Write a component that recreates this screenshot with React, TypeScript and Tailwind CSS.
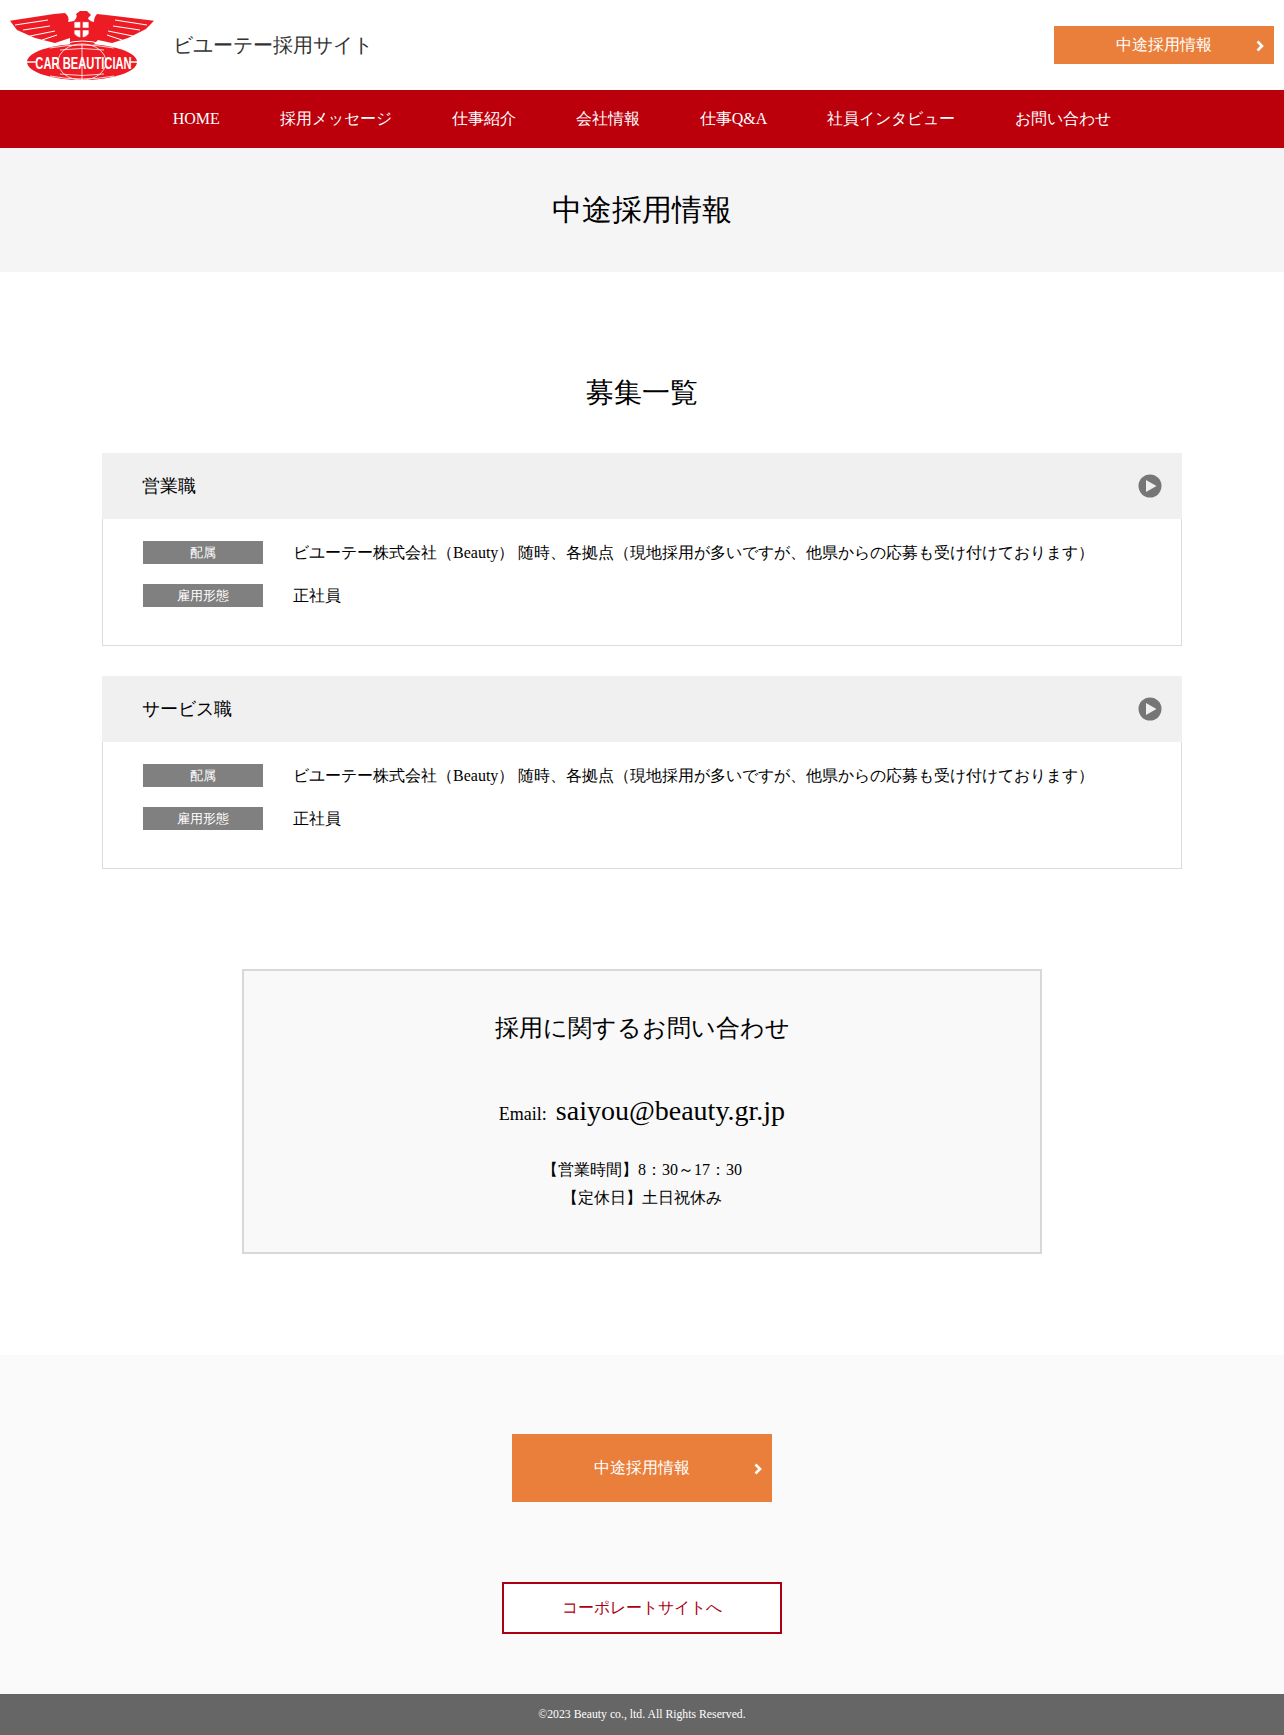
const NAV_ITEMS = ["HOME", "採用メッセージ", "仕事紹介", "会社情報", "仕事Q&A", "社員インタビュー", "お問い合わせ"];

const JOBS = ["営業職", "サービス職"];

function Logo() {
	return (
		<svg width="146" height="72" viewBox="0 0 146 72" className="shrink-0">
			{/* wings and body */}
			<path d="M0 11.7 L44 5 L55 4 Q60 8 58 13 L64 12 Q68 8 66 5 L70 2 L77 2 L81 6 L78 9 Q79 12 84 13 Q84 8 87 5 L105 7 L144 11.7 L136 20 L118 29 L102 34 L88 31 L84 35 L60 35 L60 29 L45 34 L25 29 L7 21 Z" fill="#ed1c24" />
			<g stroke="#fff" strokeWidth="1" fill="none">
				<path d="M5 16 L38 11 M13 21 L40 17 M20 27 L45 22 M32 31 L47 26" />
				<path d="M105 11 L137 16 M103 17 L130 21 M98 22 L123 27 M97 26 L112 31" />
			</g>
			<path d="M64 12.7 H79 V25 Q71.5 33 64 25 Z" fill="#fff" stroke="#ed1c24" strokeWidth="0.8" />
			<path d="M71.5 12.7 V29.5 M64 20 H79" stroke="#ed1c24" strokeWidth="2.4" />
			<path d="M54 35 Q72 29 92 35" stroke="#fff" strokeWidth="1" fill="none" />
			{/* globe */}
			<ellipse cx="72" cy="53" rx="55" ry="18" fill="#ed1c24" />
			<g stroke="#fff" strokeWidth="0.8" fill="none">
				<ellipse cx="72" cy="53" rx="24" ry="18" />
				<path d="M72 35 V71 M40 39 Q72 33 104 39 M40 67 Q72 73 104 67 M50 41 Q72 38 94 41 M50 65 Q72 68 94 65" />
			</g>
			<path d="M17 53 H27 M119 53 H127" stroke="#fff" strokeWidth="1.5" />
			<text transform="translate(73.5 60) scale(0.7 1)" textAnchor="middle" fontSize="16" fontWeight="700" fill="#fff" fontFamily="'Liberation Sans', sans-serif">
				CAR BEAUTICIAN
			</text>
		</svg>
	);
}

function PlayIcon() {
	return (
		<svg width="24" height="24" viewBox="0 0 24 24" className="shrink-0">
			<circle cx="12" cy="12" r="11.5" fill="#767676" />
			<path d="M8 6 L18.5 12 L8 18 Z" fill="#f0f0f0" />
		</svg>
	);
}

function Chevron({ className }: { className: string }) {
	return (
		<svg width="8" height="12" viewBox="0 0 8 12" className={className}>
			<path d="M1.5 1.5 L6 6 L1.5 10.5" fill="none" stroke="#fff" strokeWidth="2.6" />
		</svg>
	);
}

function JobCard({ title }: { title: string }) {
	return (
		<section className="mb-[30px]">
			<div className="flex h-[66px] items-center justify-between bg-[#f0f0f0] pl-10 pr-[20px]">
				<h3 className="text-[18px] text-black">{title}</h3>
				<PlayIcon />
			</div>
			<div className="border border-t-0 border-[#dcdcdc] px-10 pt-[22px] pb-[18px] text-[16px]">
				<div className="flex h-[43px] items-start">
					<span className="w-[120px] bg-[#808080] text-center text-[13px] leading-[23px] text-white">配属</span>
					<span className="ml-[30px] leading-[23px]">ビユーテー株式会社（Beauty） 随時、各拠点（現地採用が多いですが、他県からの応募も受け付けております）</span>
				</div>
				<div className="flex h-[43px] items-start">
					<span className="w-[120px] bg-[#808080] text-center text-[13px] leading-[23px] text-white">雇用形態</span>
					<span className="ml-[30px] leading-[23px]">正社員</span>
				</div>
			</div>
		</section>
	);
}

export default function App() {
	return (
		<div className="min-h-[1735px] bg-white text-black font-['Liberation_Serif',serif]">
			<header className="flex h-[90px] items-center justify-between pl-[10px] pr-[10px]">
				<div className="flex items-center">
					<Logo />
					<p className="ml-[17px] text-[20px] text-[#333]">ビユーテー採用サイト</p>
				</div>
				<a className="relative flex h-[38px] w-[220px] items-center justify-center bg-[#e97f3b] text-[16px] text-white">
					中途採用情報
					<Chevron className="absolute right-[10px] top-[14px]" />
				</a>
			</header>

			<nav className="flex h-[58px] items-center justify-center gap-[60px] bg-[#bb000c] text-[16px] text-white">
				{NAV_ITEMS.map((item) => (
					<a key={item}>{item}</a>
				))}
			</nav>

			<div className="flex h-[124px] items-center justify-center bg-[#f5f5f5] pb-[2px]">
				<h1 className="text-[30px]">中途採用情報</h1>
			</div>

			<main className="mx-auto w-[1080px] pt-[100px]">
				<h2 className="mb-[39px] text-center text-[28px] leading-[42px]">募集一覧</h2>
				{JOBS.map((job) => (
					<JobCard key={job} title={job} />
				))}
			</main>

			<div className="mx-auto mt-[100px] mb-[101px] h-[285px] w-[800px] border-2 border-[#d8d8d8] bg-[#f9f9f9] pt-[39px] text-center">
				<h2 className="text-[24px] leading-[36px]">採用に関するお問い合わせ</h2>
				<p className="mt-[44px] text-[18px] leading-[42px]">
					Email:&nbsp; <span className="text-[28px]">saiyou@beauty.gr.jp</span>
				</p>
				<p className="mt-[21px] text-[16px] leading-[28px]">
					【営業時間】8：30～17：30
					<br />
					【定休日】土日祝休み
				</p>
			</div>

			<div className="flex h-[339px] flex-col items-center bg-[#fafafa] pt-[79px]">
				<a className="relative flex h-[68px] w-[260px] items-center justify-center bg-[#e97f3b] text-[16px] text-white">
					中途採用情報
					<Chevron className="absolute right-[10px] top-[29px]" />
				</a>
				<a className="mt-[80px] flex h-[52px] w-[280px] items-center justify-center border-2 border-[#aa0012] bg-white text-[16px] text-[#aa0012]">
					コーポレートサイトへ
				</a>
			</div>

			<footer className="flex h-[41px] items-center justify-center bg-[#666] text-[11.75px] text-white">
				©2023 Beauty co., ltd. All Rights Reserved.
			</footer>
		</div>
	);
}
